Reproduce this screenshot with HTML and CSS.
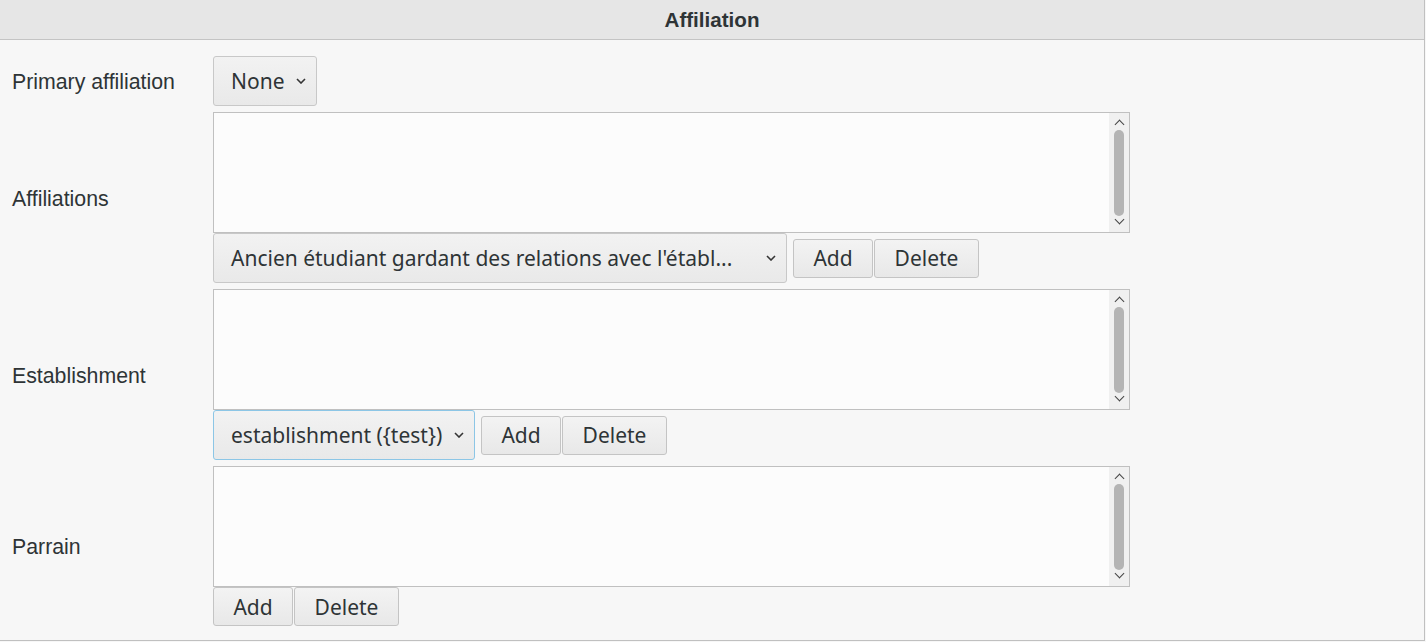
FILE: index.html
```html
<!DOCTYPE html>
<html lang="en">
<head>
<meta charset="utf-8">
<title>Affiliation</title>
<link rel="stylesheet" href="styles.css">
</head>
<body>
<div class="panel">
  <div class="panel-header">Affiliation</div>
  <div class="form">
    <div class="label">Primary affiliation</div>
    <div class="field">
      <div class="select select-none"><span class="select-text">None</span><svg class="chev" width="10" height="6" viewBox="0 0 10 6"><polyline points="1,1 5,5 9,1"/></svg></div>
    </div>

    <div class="label">Affiliations</div>
    <div class="field">
      <div class="listbox"><div class="list-body"></div><div class="scroll"><span class="arr up"></span><span class="thumb"></span><span class="arr down"></span></div></div>
      <div class="controls">
        <div class="select select-long"><span class="select-text">Ancien étudiant gardant des relations avec l'établ...</span><svg class="chev" width="10" height="6" viewBox="0 0 10 6"><polyline points="1,1 5,5 9,1"/></svg></div>
        <div class="btns"><button class="btn btn-add">Add</button><button class="btn btn-del">Delete</button></div>
      </div>
    </div>

    <div class="label">Establishment</div>
    <div class="field">
      <div class="listbox"><div class="list-body"></div><div class="scroll"><span class="arr up"></span><span class="thumb"></span><span class="arr down"></span></div></div>
      <div class="controls">
        <div class="select select-est focus"><span class="select-text">establishment ({test})</span><svg class="chev" width="10" height="6" viewBox="0 0 10 6"><polyline points="1,1 5,5 9,1"/></svg></div>
        <div class="btns"><button class="btn btn-add">Add</button><button class="btn btn-del">Delete</button></div>
      </div>
    </div>

    <div class="label">Parrain</div>
    <div class="field">
      <div class="listbox"><div class="list-body"></div><div class="scroll"><span class="arr up"></span><span class="thumb"></span><span class="arr down"></span></div></div>
      <div class="btns"><button class="btn btn-add">Add</button><button class="btn btn-del">Delete</button></div>
    </div>
  </div>
</div>
</body>
</html>
```
FILE: styles.css
```css
* { box-sizing: border-box; }
html, body { margin: 0; padding: 0; background: #f7f7f7; }
body {
  font-family: "Liberation Sans", Arial, sans-serif;
  color: #2e3436;
}
.panel {
  width: 1425px;
  border-right: 1px solid #c0c0c0;
  border-bottom: 1px solid #c0c0c0;
  background: #f7f7f7;
}
.panel-header {
  height: 40px;
  background: #e6e6e6;
  border-bottom: 1px solid #c4c4c4;
  font-weight: bold;
  font-size: 20.6px;
  line-height: 40px;
  text-align: center;
  color: #2e3436;
}
.form {
  display: grid;
  grid-template-columns: 201px 1fr;
  row-gap: 6px;
  padding: 16px 0 14px 12px;
}
.label {
  display: flex;
  align-items: center;
  padding-top: 3px;
  font-size: 21.3px;
  color: #2e3436;
}
.field {
  display: flex;
  flex-direction: column;
  align-items: flex-start;
}
.select {
  display: flex;
  align-items: center;
  height: 50px;
  border: 1px solid #c8c8c8;
  border-radius: 3px;
  background: linear-gradient(#f2f2f2, #e9e9e9);
  font-family: "Noto Sans", sans-serif;
  font-size: 21px;
  color: #2e3436;
  padding: 0 10px 0 17px;
}
.select-text { white-space: nowrap; flex: 1; }
.select-none { width: 104px; }
.select-long { width: 574px; }
.select-est { width: 262px; }
.select.focus { border-color: #8cc6e6; }
.chev {
  flex: none;
  fill: none;
  stroke: #353535;
  stroke-width: 1.6;
  margin-left: 8px;
}
.listbox {
  display: flex;
  width: 917px;
  height: 121px;
  border: 1px solid #c0c0c0;
  background: #fcfcfc;
}
.list-body { flex: 1; }
.scroll {
  width: 20px;
  background: #f0f0f0;
  display: flex;
  flex-direction: column;
  align-items: center;
  padding: 5px 0 5px;
}
.thumb {
  flex: 1;
  width: 10px;
  margin: 2px 0 0;
  background: #b4b4b4;
  border-radius: 5px;
}
.arr {
  width: 7px;
  height: 7px;
  border-left: 1.6px solid #444;
  border-top: 1.6px solid #444;
}
.arr.up { transform: rotate(45deg); margin-top: 3px; }
.arr.down { transform: rotate(225deg); margin-bottom: 4px; }
.controls {
  display: flex;
  align-items: center;
  gap: 6px;
}
.btns { display: flex; gap: 1px; }
.btn {
  height: 39px;
  border: 1px solid #c4c4c4;
  border-radius: 3px;
  background: linear-gradient(#f3f3f3, #e8e8e8);
  font-family: "Noto Sans", sans-serif;
  font-size: 21px;
  color: #2e3436;
  padding: 0;
  margin: 0;
}
.btn-add { width: 80px; }
.btn-del { width: 105px; }
```
